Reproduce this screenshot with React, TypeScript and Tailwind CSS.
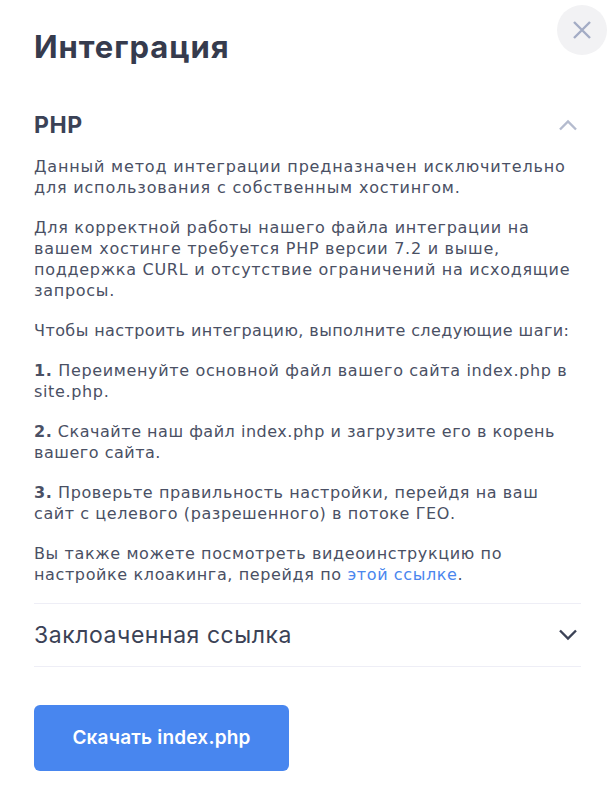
import React from "react";

const Chevron = ({ up, color }: { up?: boolean; color: string }) => (
  <svg width="20" height="12" viewBox="0 0 20 12" fill="none" stroke={color} strokeWidth="2.4" className="mr-[3px]">
    <path d={up ? "M2 10.5 L10 2.5 L18 10.5" : "M2 1.5 L10 9.5 L18 1.5"} />
  </svg>
);

const App = () => {
  return (
    <div className="relative w-[616px] h-[797px] bg-white overflow-hidden font-['Inter',sans-serif] text-[#3b4256]">
      <button className="absolute top-[5px] left-[557px] w-[50px] h-[50px] rounded-full bg-[#f2f2f4] flex items-center justify-center">
        <svg width="20" height="20" viewBox="0 0 20 20" fill="none" stroke="#a3acc4" strokeWidth="2.4">
          <path d="M2 2 L18 18 M18 2 L2 18" />
        </svg>
      </button>
      <div className="flex flex-col pl-[34px] pr-[35px] pt-[27px]">
        <h1 className="text-[31px] leading-[40px] font-bold text-[#363b4d] tracking-[0.95px]">Интеграция</h1>
        <div className="flex items-center justify-between mt-[41px] h-[34px]">
          <h2 className="text-[23px] leading-[34px] font-bold text-[#3b4256] tracking-[0.6px]">PHP</h2>
          <Chevron up color="#b4bbce" />
        </div>
        <div className="flex flex-col gap-[19px] mt-[14px] text-[16px] leading-[21px] text-[#4a5064] whitespace-nowrap font-['DejaVu_Sans',sans-serif]">
          <p className="tracking-[0.82px]">Данный метод интеграции предназначен исключительно<br />для использования с собственным хостингом.</p>
          <p className="tracking-[0.72px]">Для корректной работы нашего файла интеграции на<br />вашем хостинге требуется PHP версии 7.2 и выше,<br />поддержка CURL и отсутствие ограничений на исходящие<br />запросы.</p>
          <p className="tracking-[0.42px]">Чтобы настроить интеграцию, выполните следующие шаги:</p>
          <p className="tracking-[0.65px]"><b className="font-bold">1.</b> Переименуйте основной файл вашего сайта index.php в<br />site.php.</p>
          <p className="tracking-[0.52px]"><b className="font-bold">2.</b> Скачайте наш файл index.php и загрузите его в корень<br />вашего сайта.</p>
          <p className="tracking-[0.58px]"><b className="font-bold">3.</b> Проверьте правильность настройки, перейдя на ваш<br />сайт с целевого (разрешенного) в потоке ГЕО.</p>
          <p className="tracking-[0.62px]">Вы также можете посмотреть видеоинструкцию по<br />настройке клоакинга, перейдя по <a className="text-[#4a86ee]">этой ссылке</a>.</p>
        </div>
        <div className="flex items-center justify-between mt-[18px] h-[64px] border-y border-[#eeeef6]">
          <span className="text-[23px] tracking-[0.55px] text-[#3b4256]">Заклоаченная ссылка</span>
          <Chevron color="#3b4256" />
        </div>
        <button className="mt-[38px] w-[255px] h-[66px] rounded-[6px] bg-[#4886ef] text-white text-[19px] tracking-[0.2px] font-semibold">Скачать index.php</button>
      </div>
    </div>
  );
};

export default App;
